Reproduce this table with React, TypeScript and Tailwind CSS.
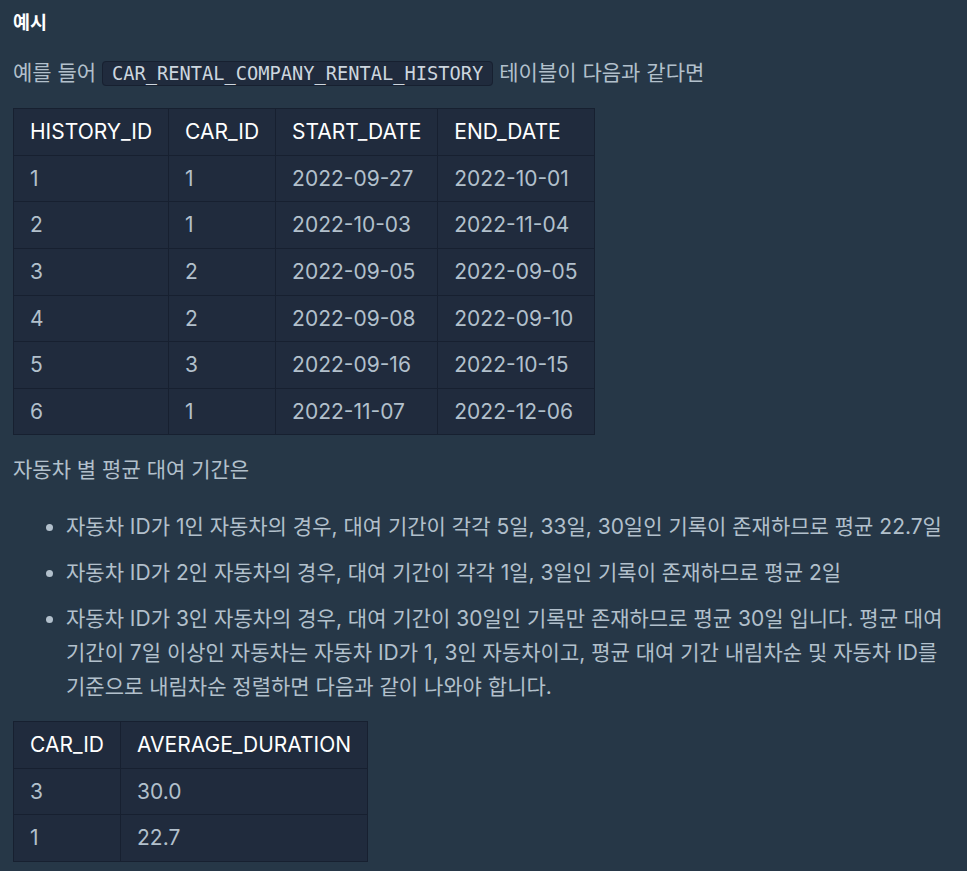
import React from 'react';

const RENTALS = [
  ['1', '1', '2022-09-27', '2022-10-01'],
  ['2', '1', '2022-10-03', '2022-11-04'],
  ['3', '2', '2022-09-05', '2022-09-05'],
  ['4', '2', '2022-09-08', '2022-09-10'],
  ['5', '3', '2022-09-16', '2022-10-15'],
  ['6', '1', '2022-11-07', '2022-12-06'],
];

const RESULT = [
  ['3', '30.0'],
  ['1', '22.7'],
];

const DataTable = ({ head, rows }: { head: string[]; rows: string[][] }) => (
  <table className="border-collapse bg-[#202b3d] border border-[#172030]">
    <thead>
      <tr>
        {head.map((h) => (
          <th key={h} className="border border-[#172030] px-[16px] py-[6px] text-left font-normal text-white">
            {h}
          </th>
        ))}
      </tr>
    </thead>
    <tbody>
      {rows.map((row, i) => (
        <tr key={i}>
          {row.map((cell, j) => (
            <td key={j} className="border border-[#172030] px-[16px] py-[6px] text-[#b2c0cc]">
              {cell}
            </td>
          ))}
        </tr>
      ))}
    </tbody>
  </table>
);

export default function App() {
  return (
    <div className="min-h-screen bg-[#263747] px-[13px] pt-[8px] pb-6 text-[21px] leading-[1.6] break-keep text-[#b2c0cc] font-['Inter','Noto_Sans_CJK_KR',sans-serif]">
      <h5 className="text-[18.5px] font-semibold text-white">예시</h5>

      <p className="mt-[18px] mb-[19px]">
        예를 들어{' '}
        <code className="rounded-[4px] border border-[#172030] bg-[#202b3d] px-[9px] py-[1px] text-[18.7px] text-[#cdd6df] font-['DejaVu_Sans_Mono',monospace]">
          CAR_RENTAL_COMPANY_RENTAL_HISTORY
        </code>{' '}
        테이블이 다음과 같다면
      </p>

      <DataTable head={['HISTORY_ID', 'CAR_ID', 'START_DATE', 'END_DATE']} rows={RENTALS} />

      <p className="mt-[18px]">자동차 별 평균 대여 기간은</p>

      <ul className="mt-[23px] list-disc pl-[53px] leading-[34px] marker:text-[#b2c0cc]">
        <li>자동차 ID가 1인 자동차의 경우, 대여 기간이 각각 5일, 33일, 30일인 기록이 존재하므로 평균 22.7일</li>
        <li className="mt-[12px]">자동차 ID가 2인 자동차의 경우, 대여 기간이 각각 1일, 3일인 기록이 존재하므로 평균 2일</li>
        <li className="mt-[12px]">
          자동차 ID가 3인 자동차의 경우, 대여 기간이 30일인 기록만 존재하므로 평균 30일 입니다. 평균 대여 기간이 7일 이상인 자동차는 자동차 ID가 1, 3인 자동차이고, 평균 대여 기간 내림차순 및 자동차 ID를 기준으로 내림차순 정렬하면 다음과 같이 나와야 합니다.
        </li>
      </ul>

      <div className="mt-[17px]">
        <DataTable head={['CAR_ID', 'AVERAGE_DURATION']} rows={RESULT} />
      </div>
    </div>
  );
}
